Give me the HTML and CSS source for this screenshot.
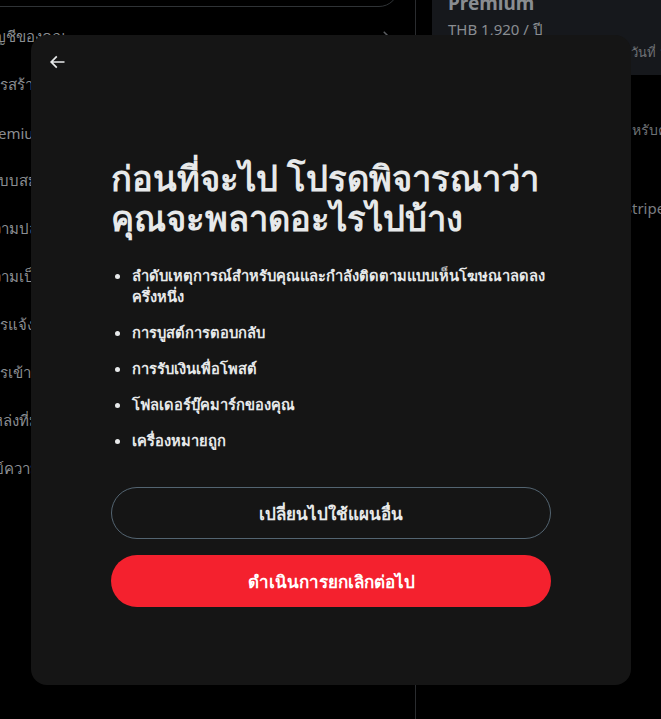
FILE: index.html
```html
<!DOCTYPE html>
<html>
<head>
  <meta charset="utf-8">
  <link rel="stylesheet" href="styles.css">
</head>
<body>
  <div class="page">
    <div class="nav-col">
      <div class="search-box"></div>
      <div class="nav-list">
        <div class="nav-item"><span class="nav-text">บัญชีของคุณ</span>
          <svg class="chevron" viewBox="0 0 24 24"><path d="M9 5l7 7-7 7" fill="none" stroke="currentColor" stroke-width="2"/></svg>
        </div>
        <div class="nav-item"><span class="nav-text">การสร้างรายได้</span></div>
        <div class="nav-item"><span class="nav-text">Premium</span></div>
        <div class="nav-item"><span class="nav-text">ระบบสมาชิกของผู้สร้าง</span></div>
        <div class="nav-item"><span class="nav-text">ความปลอดภัยและการเข้าถึงบัญชี</span></div>
        <div class="nav-item"><span class="nav-text">ความเป็นส่วนตัวและความปลอดภัย</span></div>
        <div class="nav-item"><span class="nav-text">การแจ้งเตือน</span></div>
        <div class="nav-item"><span class="nav-text">การเข้าถึง การแสดงผล และภาษา</span></div>
        <div class="nav-item"><span class="nav-text">แหล่งที่มาเพิ่มเติม</span></div>
        <div class="nav-item"><span class="nav-text last">ศูนย์ความช่วยเหลือ</span></div>
      </div>
    </div>
    <div class="detail-col">
      <div class="plan-card">
        <div class="plan-name">Premium</div>
        <div class="plan-price">THB 1,920 / ปี</div>
        <div class="plan-date"><span class="hidden-part">ต่ออายุใน</span>วันที่ 1 มีนาคม</div>
      </div>
      <div class="detail-line first"><span class="hidden-part">สิทธิประโยชน์สำ</span>หรับคุณ</div>
      <div class="detail-line"><span class="hidden-part">ชำระเงินผ่าน S</span>tripe</div>
    </div>
  </div>

  <div class="modal">
    <div class="modal-header">
      <svg class="back" viewBox="0 0 24 24"><path d="M7.414 13l5.043 5.04-1.414 1.42L3.586 12l7.457-7.46 1.414 1.42L7.414 11H21v2H7.414z" fill="currentColor"/></svg>
    </div>
    <div class="modal-body">
      <h1 class="modal-title">ก่อนที่จะไป โปรดพิจารณาว่าคุณจะพลาดอะไรไปบ้าง</h1>
      <ul class="lose-list">
        <li>ลำดับเหตุการณ์สำหรับคุณและกำลังติดตามแบบเห็นโฆษณาลดลงครึ่งหนึ่ง</li>
        <li>การบูสต์การตอบกลับ</li>
        <li>การรับเงินเพื่อโพสต์</li>
        <li>โฟลเดอร์บุ๊คมาร์กของคุณ</li>
        <li>เครื่องหมายถูก</li>
      </ul>
      <div class="actions">
        <button class="btn btn-outline">เปลี่ยนไปใช้แผนอื่น</button>
        <button class="btn btn-red">ดำเนินการยกเลิกต่อไป</button>
      </div>
    </div>
  </div>
</body>
</html>
```

FILE: styles.css
```css
/* Base */
body {
  margin: 0;
  background: #000;
  font-family: "Noto Sans", "DejaVu Sans", sans-serif;
  overflow: hidden;
  height: 719px;
}

.page {
  display: flex;
  height: 719px;
}

/* Settings column behind the dialog */
.nav-col {
  width: 415px;
  border-right: 1px solid #2a2c2f;
  flex-shrink: 0;
  overflow: hidden;
}

.search-box {
  height: 40px;
  margin: -35px 16px 0 -20px;
  border: 1px solid #2f3336;
  border-radius: 20px;
}

.nav-list {
  padding-top: 6px;
}

.nav-item {
  height: 48px;
  display: flex;
  align-items: center;
  justify-content: space-between;
  padding-right: 20px;
  color: #8a8d91;
  font-size: 15px;
}

.nav-text {
  margin-left: -17px;
  white-space: nowrap;
}

.nav-text.last {
  margin-left: -25px;
}

.chevron {
  width: 18px;
  height: 18px;
  color: #5a5d61;
}

.detail-col {
  flex: 1;
  padding-left: 16px;
  overflow: hidden;
  white-space: nowrap;
}

.plan-card {
  background: #16181c;
  height: 84px;
  margin-top: -9px;
  padding: 0 16px;
}

.plan-name {
  color: #8a8d91;
  font-size: 19px;
  font-weight: bold;
  line-height: 24px;
}

.plan-price {
  color: #8a8d91;
  font-size: 15px;
  line-height: 20px;
  margin-top: 4px;
}

.plan-date {
  color: #6e7175;
  font-size: 13px;
  line-height: 18px;
  margin-top: 4px;
}

/* leading words that sit behind the dialog */
.hidden-part {
  display: inline-block;
  width: 183px;
  overflow: hidden;
  text-align: right;
  vertical-align: top;
}

.detail-line {
  color: #6e7175;
  font-size: 14px;
  line-height: 20px;
  padding-left: 16px;
}

.detail-line .hidden-part {
  width: 184px;
}

.detail-line.first {
  margin-top: 45px;
}

.detail-line + .detail-line {
  margin-top: 58px;
  color: #7a7d81;
  font-size: 15px;
}

/* Dialog */
.modal {
  position: absolute;
  left: 31px;
  top: 35px;
  width: 600px;
  height: 650px;
  background: #151515;
  border-radius: 16px;
  display: flex;
  flex-direction: column;
}

.modal-header {
  height: 53px;
  display: flex;
  align-items: center;
  padding-left: 16px;
}

.back {
  width: 20px;
  height: 20px;
  color: #e7e9ea;
}

.modal-body {
  padding: 0 80px;
}

.modal-title {
  margin: 70px 0 0;
  color: #e7e9ea;
  font-size: 34.5px;
  line-height: 40px;
  font-weight: bold;
}

.lose-list {
  margin: 27px 0 0;
  padding-left: 21px;
  color: #e7e9ea;
  font-size: 14.7px;
  font-weight: bold;
  line-height: 21px;
}

.lose-list li {
  margin-bottom: 15px;
}

.actions {
  display: flex;
  flex-direction: column;
  gap: 16px;
  margin-top: 36px;
}

.btn {
  height: 52px;
  border-radius: 26px;
  font-family: inherit;
  font-size: 17px;
  font-weight: bold;
  cursor: pointer;
}

.btn-outline {
  background: transparent;
  border: 1px solid #536471;
  color: #e7e9ea;
}

.btn-red {
  background: #f4212e;
  border: none;
  color: #fff;
}
```
